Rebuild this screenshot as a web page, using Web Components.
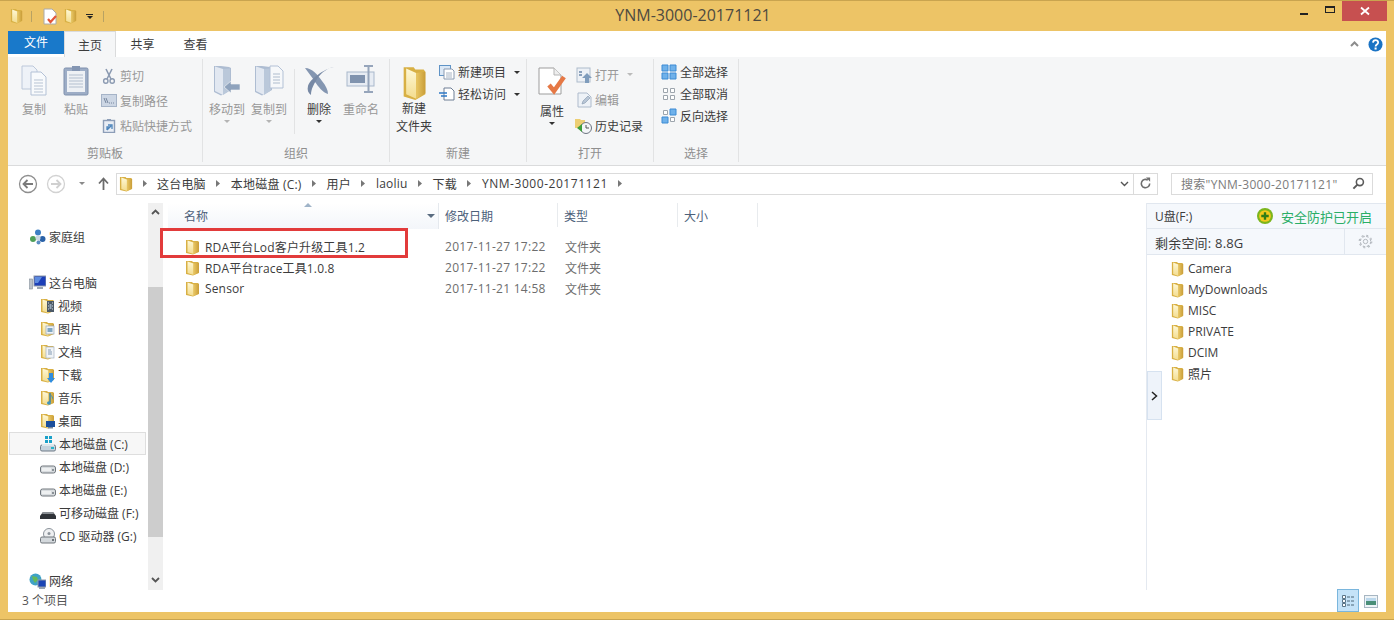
<!DOCTYPE html>
<html lang="zh">
<head>
<meta charset="utf-8">
<title>YNM-3000-20171121</title>
<style>
  html, body { margin: 0; height: 100%; overflow: hidden; }
  body { font: 12px 'Open Sans', 'Noto Sans CJK SC', sans-serif; color: #3c3c3c; }
</style>
</head>
<body>
<win-window>
  <win-titlebar slot="title" caption="YNM-3000-20171121"></win-titlebar>
  <win-tabs slot="tabs"></win-tabs>

  <win-ribbon slot="ribbon">
    <rb-group label="剪贴板" style="--w:195px;--pad:7px 0 0 5px">
      <rb-big style="--bw:42px" dim><x-icon name="copy" w="28" h="31"></x-icon>复制</rb-big>
      <rb-big style="--bw:42px" dim><x-icon name="paste" w="26" h="31"></x-icon>粘贴</rb-big>
      <rb-col style="--rh:25px;--top:-3px">
        <rb-small dim><x-icon name="cut" w="14" h="16"></x-icon>剪切</rb-small>
        <rb-small dim><x-icon name="path" w="16" h="13"></x-icon>复制路径</rb-small>
        <rb-small dim><x-icon name="shortcut" w="14" h="15"></x-icon>粘贴快捷方式</rb-small>
      </rb-col>
    </rb-group>
    <rb-group label="组织" style="--w:187px;--pad:7px 0 0 3px">
      <rb-big style="--bw:42px" dim arrow><x-icon name="moveto" w="28" h="32"></x-icon>移动到</rb-big>
      <rb-big style="--bw:42px" dim arrow><x-icon name="copyto" w="30" h="32"></x-icon>复制到</rb-big>
      <rb-sep></rb-sep>
      <rb-big style="--bw:46px" arrow dark><x-icon name="del" w="30" h="31"></x-icon>删除</rb-big>
      <rb-big style="--bw:38px" dim><x-icon name="rename" w="30" h="28"></x-icon>重命名</rb-big>
    </rb-group>
    <rb-group label="新建" style="--w:137px;--pad:7px 0 0 3px">
      <rb-big style="--bw:42px;--ich:35px" dark><x-icon name="folder" w="25" h="36"></x-icon>新建<br>文件夹</rb-big>
      <rb-col style="--rh:22px;--top:-5px">
        <rb-small menu><x-icon name="newitem" w="16" h="15"></x-icon>新建项目</rb-small>
        <rb-small menu><x-icon name="easy" w="16" h="14"></x-icon>轻松访问</rb-small>
      </rb-col>
    </rb-group>
    <rb-group label="打开" style="--w:127px;--pad:7px 0 0 5px">
      <rb-big style="--bw:40px;--ich:38px;--icm:2px" arrow dark><x-icon name="props" w="28" h="29"></x-icon>属性</rb-big>
      <rb-col style="--rh:25.5px;--top:-4px">
        <rb-small dim caret><x-icon name="open" w="16" h="16"></x-icon>打开</rb-small>
        <rb-small dim><x-icon name="edit" w="15" h="16"></x-icon>编辑</rb-small>
        <rb-small><x-icon name="history" w="18" h="16"></x-icon>历史记录</rb-small>
      </rb-col>
    </rb-group>
    <rb-group label="选择" style="--w:85px;--pad:4px 0 0 3px">
      <rb-col style="--rh:22px;--top:-2px">
        <rb-small><x-icon name="selall" w="16" h="16"></x-icon>全部选择</rb-small>
        <rb-small><x-icon name="selnone" w="16" h="16"></x-icon>全部取消</rb-small>
        <rb-small><x-icon name="selinv" w="16" h="16"></x-icon>反向选择</rb-small>
      </rb-col>
    </rb-group>
  </win-ribbon>

  <win-address slot="address"></win-address>

  <nav-pane slot="nav">
    <nav-item top style="margin-top:25px"><x-icon name="home" w="17" h="16"></x-icon>家庭组</nav-item>
    <nav-item top style="margin-top:23px"><x-icon name="pc" w="17" h="16"></x-icon>这台电脑</nav-item>
    <nav-item><x-icon name="fvideo" w="15" h="16"></x-icon>视频</nav-item>
    <nav-item><x-icon name="fpic" w="15" h="16"></x-icon>图片</nav-item>
    <nav-item><x-icon name="fdoc" w="15" h="16"></x-icon>文档</nav-item>
    <nav-item><x-icon name="fdown" w="15" h="16"></x-icon>下载</nav-item>
    <nav-item><x-icon name="fmusic" w="15" h="16"></x-icon>音乐</nav-item>
    <nav-item><x-icon name="fdesk" w="15" h="16"></x-icon>桌面</nav-item>
    <nav-item selected><x-icon name="sysdisk" w="16" h="16"></x-icon>本地磁盘 (C:)</nav-item>
    <nav-item><x-icon name="disk" w="16" h="16"></x-icon>本地磁盘 (D:)</nav-item>
    <nav-item><x-icon name="disk" w="16" h="16"></x-icon>本地磁盘 (E:)</nav-item>
    <nav-item><x-icon name="usb" w="16" h="16"></x-icon>可移动磁盘 (F:)</nav-item>
    <nav-item><x-icon name="cd" w="16" h="16"></x-icon>CD 驱动器 (G:)</nav-item>
    <nav-item top style="margin-top:22px"><x-icon name="net" w="17" h="16"></x-icon>网络</nav-item>
  </nav-pane>

  <file-list slot="files">
    <file-row name="RDA平台Lod客户升级工具1.2" date="2017-11-27 17:22" type="文件夹"></file-row>
    <file-row name="RDA平台trace工具1.0.8" date="2017-11-27 17:22" type="文件夹"></file-row>
    <file-row name="Sensor" date="2017-11-21 14:58" type="文件夹"></file-row>
  </file-list>

  <side-panel slot="side">
    <side-folder>Camera</side-folder>
    <side-folder>MyDownloads</side-folder>
    <side-folder>MISC</side-folder>
    <side-folder>PRIVATE</side-folder>
    <side-folder>DCIM</side-folder>
    <side-folder>照片</side-folder>
  </side-panel>

  <win-status slot="status">3 个项目</win-status>
</win-window>

<script>
const FOLDER = `
  <defs>
    <linearGradient id="p" x1="0" x2="0" y1="0" y2="1">
      <stop offset="0" stop-color="#fef8d6"/><stop offset="1" stop-color="#f3dc8e"/></linearGradient>
    <linearGradient id="g" x1="0" x2="1" y1="0" y2="0">
      <stop offset="0" stop-color="#e9c764"/><stop offset="1" stop-color="#c99d38"/></linearGradient>
  </defs>
  <path d="M1 1l6 0 1 1h5l1 1v10l-6 2.500L1 14z" fill="#d8b044"/>
  <path d="M2.500 1.500L8.500 3.500V15L2.500 13z" fill="url(#p)"/>
  <path d="M8.500 3.500L14 3v9.500L8.500 15z" fill="url(#g)"/>`

// same folder shape, in the washed blue of a disabled ribbon button
const GREY_FOLDER = `
  <path d="M1 1l7 0 8 1 2 1v22l-10 5.500L1 27z" fill="#aebdd2"/>
  <path d="M2 1.500L10 4v26L2 26z" fill="#e2e8f1"/>
  <path d="M10 4l7-.500v22L10 30z" fill="#bac8da"/>`

// each icon: [viewBox width, viewBox height, markup]
const ICONS = {
  folder: [15, 16, FOLDER],
  copy: [28, 31, `
    <path d="M2 1h11l4 4v19H2z" fill="#eef2f8" stroke="#bcc8da"/>
    <path d="M11 7h10l5 5v18H11z" fill="#f8fafc" stroke="#b3c1d6"/>
    <path d="M14 15h9M14 18h9M14 21h9M14 24h9M14 27h9" stroke="#b7c3d3"/>`],
  paste: [26, 31, `
    <rect x="1" y="3" width="24" height="27" rx="1.5" fill="#9dadc6" stroke="#7e90ad"/>
    <rect x="4" y="6" width="18" height="21" fill="#eef1f5"/>
    <path d="M6 10h14M6 13h14M6 16h14M6 19h14M6 22h14" stroke="#b3bfcf"/>
    <rect x="9" y="1" width="8" height="5" fill="#8496b3"/>`],
  cut: [14, 16, `
    <path d="M4 1l5 10M10 1L5 11" stroke="#8b9ab1" stroke-width="1.6" fill="none"/>
    <circle cx="3.8" cy="13" r="2.2" fill="none" stroke="#8b9ab1" stroke-width="1.4"/>
    <circle cx="10.2" cy="13" r="2.2" fill="none" stroke="#8b9ab1" stroke-width="1.4"/>`],
  path: [16, 13, `
    <rect x=".5" y=".5" width="15" height="12" fill="#ccd6e4" stroke="#a5b3c7"/>
    <path d="M3 4l2 5M5 4l2 5" stroke="#76869e"/><path d="M8 9h1M10 9h1M12 9h1" stroke="#76869e"/>`],
  shortcut: [14, 15, `
    <rect x="1.5" y="2.5" width="11" height="12" fill="#e8edf4" stroke="#8c9db7" stroke-width="1.4"/>
    <rect x="5" y="1" width="4" height="2" fill="#8c9db7"/>
    <path d="M5 12V9h3M6 7h4v4M5 12l4-4" stroke="#4d85bc" stroke-width="1.3" fill="none"/>`],
  moveto: [28, 32, GREY_FOLDER + `<path d="M11 22l7-6v3h9v6h-9v3z" fill="#8fa3bd" stroke="#f5f6f7" stroke-width=".6"/>`],
  copyto: [30, 32, GREY_FOLDER + `
    <path d="M16 1h8l5 5v17H16z" fill="#f6f8fa" stroke="#b3c1d6"/>
    <path d="M19 9h7M19 12h7M19 15h7M19 18h7" stroke="#aebccd"/>`],
  del: [30, 31, `
    <path d="M1 3c7 0 13 7 17 13 4 5 6 9 6 13-5-1-10-8-13-12C8 12 4 7 1 3z" fill="#8496b1"/>
    <path d="M30 2c-7 1-13 6-17 12-3 5-6 10-6 16-3-2-4-5-3-9C6 14 20 4 30 2z" fill="#7789a5"/>`],
  rename: [30, 28, `
    <rect x="1" y="7" width="27" height="14" fill="#e7ecf3" stroke="#a9b8cc"/>
    <rect x="4" y="10" width="15" height="8" fill="#8093ae"/>
    <path d="M18 1h9M18 27h9M22.500 1v26" stroke="#96a5bb" stroke-width="2"/>`],
  newitem: [16, 15, `
    <rect x=".5" y=".5" width="11" height="10" fill="#dbe8f6" stroke="#5f93c6"/>
    <path d="M5 4h8l2 2v8H5z" fill="#fff" stroke="#8a9ab1"/>
    <path d="M7 8h6M7 10h6M7 12h6" stroke="#a8b4c4"/>`],
  easy: [16, 14, `
    <path d="M5 1h7l3 3v9H5z" fill="#fff" stroke="#6f7f95"/>
    <path d="M0 6h8M2 9h6" stroke="#2f79c6" stroke-width="1.5"/>`],
  props: [28, 29, `
    <path d="M1 1h15l7 7v19H1z" fill="#fff" stroke="#9d9d9d"/>
    <path d="M16 1v7h7" fill="#eee" stroke="#b5b5b5"/>
    <path d="M11 18l5 6 10-14" fill="none" stroke="#e57845" stroke-width="4.500"/>`],
  open: [16, 16, `
    <rect x="1" y="1" width="13" height="14" fill="#edf1f6" stroke="#aebbcc"/>
    <path d="M3 5h3M3 8h3" stroke="#8ba1bc" stroke-width="2"/>
    <path d="M11 6l5 5h-3v5H9v-5H6z" fill="#7f9cbc"/>`],
  edit: [15, 16, `
    <path d="M1 1h9l4 4v10H1z" fill="#eef2f7" stroke="#aebbcc"/>
    <path d="M5 12l1-3 5-5 2 2-5 5z" fill="#b9c6d6" stroke="#8fa0b5" stroke-width=".7"/>`],
  history: [18, 16, `
    <path d="M0 1h5l1 1h4v8H0z" fill="#edcf74"/>
    <circle cx="11" cy="10" r="5.500" fill="#f4f6f8" stroke="#6d7480"/>
    <path d="M11 7v3h3" stroke="#555" fill="none"/>
    <path d="M7 6L2 10l5 4z" fill="#3f9e3a"/>`],
  selall: [16, 16, `<path d="M1 1h6v6H1zM9 1h6v6H9zM1 9h6v6H1zM9 9h6v6H9z" fill="#6fb1ea" stroke="#3d8bd4"/>`],
  selnone: [16, 16, `<path d="M2.500 2.500h4v4h-4zM9.500 2.500h4v4h-4zM2.500 9.500h4v4h-4zM9.500 9.500h4v4h-4z" fill="#fff" stroke="#9da5ad"/>`],
  selinv: [16, 16, `
    <path d="M9 1h6v6H9zM1 9h6v6H1z" fill="#6fb1ea" stroke="#3d8bd4"/>
    <path d="M2.500 2.500h4v4h-4zM9.500 9.500h4v4h-4z" fill="#fff" stroke="#9da5ad"/>`],
  doccheck: [16, 17, `
    <path d="M2 1h8l4 4v11H2z" fill="#fff" stroke="#aaa"/>
    <path d="M6 11l2.500 3L14 8" fill="none" stroke="#e2563a" stroke-width="2.200"/>`],
  home: [17, 16, `
    <circle cx="9" cy="3.500" r="3" fill="#3d7fc4"/><circle cx="13.500" cy="10" r="3" fill="#2a62a8"/>
    <circle cx="4" cy="10" r="3" fill="#4f9f58"/><circle cx="9" cy="9" r="2.500" fill="#c9d6e2"/>
    <circle cx="9.500" cy="13.500" r="2" fill="#5d8fc4"/>`],
  pc: [17, 16, `
    <rect x="5" y="1" width="12" height="10" fill="#1c3fb8" stroke="#8d99aa"/>
    <path d="M6 2h7l-4 6H6z" fill="#5d8be0"/>
    <path d="M8 12h6v2H8z" fill="#9aa5b1"/><rect x="0" y="4" width="3.500" height="10" fill="#b9c0c8" stroke="#7f8994" stroke-width=".6"/>`],
  net: [17, 16, `
    <circle cx="6.500" cy="6.500" r="6" fill="#3fa2c6"/><path d="M3 3l5 1 1 3-3 3-2-3z" fill="#66b85a"/>
    <rect x="9" y="7" width="8" height="7" fill="#1b45b5" stroke="#8d99aa"/><path d="M10 14h6v2h-6z" fill="#9aa5b1"/>`],
  fvideo: [15, 16, FOLDER + `<rect x="7" y="3" width="7" height="11" fill="#4c5a68"/><path d="M8 5h1M8 8h1M8 11h1M12 5h1M12 8h1M12 11h1" stroke="#d5dbe2"/><rect x="9.500" y="6" width="2" height="5" fill="#93a6b8"/>`],
  fpic: [15, 16, FOLDER + `<rect x="6" y="5" width="8" height="8" fill="#eef2f6" stroke="#9aa8b8" stroke-width=".7"/><rect x="7.500" y="7" width="5" height="4" fill="#7fa6c2"/>`],
  fdoc: [15, 16, FOLDER + `<rect x="6" y="3" width="8" height="11" fill="#f1f4f7" stroke="#a5b1bf" stroke-width=".7"/><path d="M8 6h3M8 8h4M8 10h4" stroke="#8299b2"/>`],
  fdown: [15, 16, FOLDER + `<path d="M9 6h4v5h2l-4 5-4-5h2z" fill="#2f8de0"/>`],
  fmusic: [15, 16, FOLDER + `<path d="M10 3v9" stroke="#2e7ea8" stroke-width="1.400"/><path d="M10 3c1 3 4 3 3 7M7 13a2 1.700 0 1 0 4 0 2 1.700 0 1 0-4 0" fill="#3d93bf"/>`],
  fdesk: [15, 16, FOLDER + `<rect x="6" y="8" width="9" height="6" fill="#1c4f9c"/><rect x="8" y="14" width="5" height="1.500" fill="#76869a"/>`],
  sysdisk: [16, 16, `
    <path d="M5 0h3v3H5zM9 0h3v3H9zM5 4h3v3H5zM9 4h3v3H9z" fill="#1ba1c9"/>
    <rect x=".5" y="9" width="15" height="6" rx="1.500" fill="#c5d2dc" stroke="#6f7b87"/><rect x="2" y="8" width="12" height="2" fill="#dfe7ec"/><rect x="11" y="11" width="3" height="2" fill="#27b2c9"/>`],
  disk: [16, 16, `
    <rect x=".5" y="7" width="15" height="7" rx="2" fill="#d8dcdf" stroke="#70777d"/><rect x="2" y="9" width="9" height="3" fill="#eef0f1"/><rect x="12" y="10" width="2" height="2" fill="#8a9197"/>`],
  usb: [16, 16, `
    <path d="M3 7h10l3 4v3H0v-3z" fill="#2f3338"/><path d="M3 7h10l1 2H2z" fill="#8a8f94"/>`],
  cd: [16, 16, `
    <circle cx="9" cy="6" r="5.500" fill="#eef0f2" stroke="#8b929a"/><circle cx="9" cy="5.500" r="1.500" fill="#8b929a"/>
    <rect x=".5" y="9" width="15" height="6" rx="1.500" fill="#d3d8dc" stroke="#70777d"/><rect x="12" y="11" width="2" height="2" fill="#6b7278"/>`],
  shield: [15, 15, `
    <circle cx="7.500" cy="7.500" r="7.500" fill="#7cb51c"/><circle cx="7.500" cy="7.500" r="5.500" fill="#f3c91c"/>
    <path d="M7.500 4v7M4 7.500h7" stroke="#2f7d16" stroke-width="2.200"/>`],
  gear: [15, 15, `
    <circle cx="7.500" cy="7.500" r="2.200" fill="none" stroke="#b4b9bf"/>
    <circle cx="7.500" cy="7.500" r="5.200" fill="none" stroke="#b4b9bf" stroke-width="1.100" stroke-dasharray="2.600 1.500"/>
    <circle cx="7.500" cy="7.500" r="6.300" fill="none" stroke="#b4b9bf" stroke-width="1.100" stroke-dasharray="2 2.950"/>`],
  back: [20, 20, `
    <circle cx="10" cy="10" r="8.500" fill="#fff" stroke="#8e8e8e" stroke-width="1.300"/>
    <path d="M15 10H6M9.500 6L5.500 10l4 4" fill="none" stroke="#7a7a7a" stroke-width="1.800"/>`],
  forward: [20, 20, `
    <circle cx="10" cy="10" r="8.500" fill="#fff" stroke="#d2d2d2" stroke-width="1.300"/>
    <path d="M5 10h9M10.500 6l4 4-4 4" fill="none" stroke="#d0d0d0" stroke-width="1.800"/>`],
  up: [11, 13, `<path d="M5.500 13V2M1 6.500L5.500 1.500 10 6.500" fill="none" stroke="#6b6b6b" stroke-width="1.800"/>`],
  refresh: [14, 14, `<path d="M11.500 7a4.500 4.500 0 1 1-2-3.700" fill="none" stroke="#6e6e6e" stroke-width="1.700"/><path d="M7.500 .5h4.500v4.500z" fill="#6e6e6e"/>`],
  search: [14, 14, `<circle cx="8.500" cy="5.500" r="3.800" fill="none" stroke="#5a5a5a" stroke-width="1.700"/><path d="M5.800 8.200L1.500 12.500" stroke="#5a5a5a" stroke-width="2.200"/>`],
  help: [16, 16, `<circle cx="8" cy="8" r="7.500" fill="#1a73c4"/><path d="M5.300 6c.2-3.500 5.600-3.500 5.500-.2 0 2.200-2.700 2.200-2.700 4.300" fill="none" stroke="#fff" stroke-width="1.900"/><rect x="7" y="11.200" width="2.200" height="2.200" fill="#fff"/>`],
  details: [14, 14, `<path d="M1.500 1.500h3v3h-3zM1.500 5.500h3v3h-3zM1.500 9.500h3v3h-3z" fill="#fff" stroke="#5a7487"/><path d="M6 3h8M6 7h8M6 11h8" stroke="#4d6679" stroke-dasharray="3 1"/>`],
  thumbs: [14, 13, `<rect x=".5" y=".5" width="13" height="12" fill="#eef4f8" stroke="#a7b6c2"/><rect x="2" y="3" width="10" height="7" fill="#4a8f78"/><rect x="2" y="3" width="10" height="3" fill="#bcd8ec"/>`]
}

/**
 * One small picture, drawn from the ICONS table.
 */
customElements.define('x-icon', class extends HTMLElement {
  connectedCallback () {
    const [vw, vh, body] = ICONS[this.getAttribute('name')]
    const w = this.getAttribute('w') || vw
    const h = this.getAttribute('h') || vh
    this.attachShadow({ mode: 'open' }).innerHTML = `
      <style>:host { display: inline-flex; flex: none; } svg { display: block; }</style>
      <svg width="${w}" height="${h}" viewBox="0 0 ${vw} ${vh}" preserveAspectRatio="none">${body}</svg>`
  }
})

const windowTemplate = document.createElement('template')
windowTemplate.innerHTML = `
  <style>
    :host {
      display: flex;
      flex-direction: column;
      box-sizing: border-box;
      width: 1394px;
      height: 620px;
      background: #edc466;
      border-top: 1px solid #c9a44f;
      border-bottom: 1px solid #c9a44f;
      overflow: hidden;
    }
    #inner {
      flex: 1;
      min-height: 0;
      margin: 0 8px 7px;
      display: flex;
      flex-direction: column;
      background: #fff;
    }
    #main {
      flex: 1;
      min-height: 0;
      display: flex;
    }
  </style>
  <slot name="title"></slot>
  <div id="inner">
    <slot name="tabs"></slot>
    <slot name="ribbon"></slot>
    <slot name="address"></slot>
    <div id="main">
      <slot name="nav"></slot>
      <slot name="files"></slot>
      <slot name="side"></slot>
    </div>
    <slot name="status"></slot>
  </div>
`
customElements.define('win-window', class extends HTMLElement {
  constructor () {
    super()
    this.attachShadow({ mode: 'open' }).appendChild(windowTemplate.content.cloneNode(true))
  }
})

customElements.define('win-titlebar', class extends HTMLElement {
  connectedCallback () {
    this.attachShadow({ mode: 'open' }).innerHTML = `
      <style>
        :host { display: flex; align-items: flex-start; height: 30px; position: relative; }
        #quick { display: flex; align-items: center; gap: 0; height: 30px; padding-left: 10px; }
        .sep { width: 1px; height: 11px; background: #b8a263; }
        #caption {
          position: absolute; left: 0; right: 8px; top: 4px; text-align: center;
          font-size: 16px; line-height: 20px; color: #4d4a40; pointer-events: none;
        }
        #btns { margin-left: auto; margin-right: 7px; display: flex; height: 20px; }
        .b { display: flex; align-items: center; justify-content: center; height: 20px; }
        #min { width: 26px; } #min i { display: block; width: 8px; height: 2px; margin-top: 5px; background: #222; }
        #max { width: 25px; } #max i { display: block; box-sizing: border-box; width: 10px; height: 7px; margin-top: -3px; border: 1px solid #222; border-top-width: 2px; }
        #close { width: 45px; background: #c75050; color: #fff; }
        .caret { width: 0; height: 0; border: 3px solid transparent; border-top-color: #222; border-bottom: 0; margin-top: 2px; }
      </style>
      <div id="quick">
        <x-icon name="folder" w="13" h="16"></x-icon>
        <span class="sep" style="margin-left:8px"></span>
        <x-icon name="doccheck" w="16" h="17" style="margin-left:10px"></x-icon>
        <x-icon name="folder" w="13" h="16" style="margin-left:6px"></x-icon>
        <span style="margin-left:9px;display:flex;flex-direction:column;align-items:center;gap:1px">
          <i style="width:7px;height:1px;background:#222"></i><i class="caret" style="margin:0"></i>
        </span>
        <span class="sep" style="margin-left:10px"></span>
      </div>
      <div id="caption">${this.getAttribute('caption')}</div>
      <div id="btns">
        <div class="b" id="min"><i></i></div>
        <div class="b" id="max"><i></i></div>
        <div class="b" id="close">
          <svg width="10" height="10" viewBox="0 0 10 10"><path d="M1 1.500l8 7M9 1.500l-8 7" stroke="#fff" stroke-width="1.800"/></svg>
        </div>
      </div>`
  }
})

customElements.define('win-tabs', class extends HTMLElement {
  connectedCallback () {
    this.attachShadow({ mode: 'open' }).innerHTML = `
      <style>
        :host { display: flex; height: 26px; flex: none; background: #fff; color: #3c3c3c; }
        .t { width: 53px; text-align: center; line-height: 27px; }
        #file { width: 56px; height: 23px; line-height: 23px; background: #1979ca; color: #fff; }
        #home { width: 52px; box-sizing: border-box; background: #f5f6f7; border: 1px solid #dadbdc; border-bottom: 0; }
        #right { margin-left: auto; display: flex; align-items: center; gap: 9px; padding-right: 3px; }
      </style>
      <div class="t" id="file">文件</div>
      <div class="t" id="home">主页</div>
      <div class="t">共享</div>
      <div class="t">查看</div>
      <div id="right">
        <svg width="9" height="6" viewBox="0 0 9 6"><path d="M1 5l3.500-3.500L8 5" fill="none" stroke="#8c8c8c" stroke-width="2"/></svg>
        <x-icon name="help" w="15" h="15"></x-icon>
      </div>`
  }
})

customElements.define('win-ribbon', class extends HTMLElement {
  connectedCallback () {
    this.attachShadow({ mode: 'open' }).innerHTML = `
      <style>
        :host {
          display: flex; flex: none; height: 109px; box-sizing: border-box;
          background: #f5f6f7; border-bottom: 1px solid #dadbdc;
        }
      </style>
      <slot></slot>`
  }
})

customElements.define('rb-group', class extends HTMLElement {
  connectedCallback () {
    this.attachShadow({ mode: 'open' }).innerHTML = `
      <style>
        :host {
          display: flex; flex-direction: column; flex: none; box-sizing: border-box;
          width: var(--w); border-right: 1px solid #e2e3e4; margin: 2px 0 3px;
        }
        #body { flex: 1; display: flex; align-items: flex-start; padding: var(--pad); min-height: 0; }
        #label { height: 17px; line-height: 18px; text-align: center; color: #8f8f8f; }
      </style>
      <div id="body"><slot></slot></div>
      <div id="label">${this.getAttribute('label')}</div>`
  }
})

customElements.define('rb-big', class extends HTMLElement {
  connectedCallback () {
    const arrow = this.hasAttribute('arrow')
    const tone = this.hasAttribute('dark') ? '#3c3c3c' : '#989898'
    const caret = this.hasAttribute('dark') ? '#333' : '#b4b4b4'
    this.attachShadow({ mode: 'open' }).innerHTML = `
      <style>
        :host {
          display: flex; flex-direction: column; align-items: center; flex: none;
          width: var(--bw); color: ${tone}; text-align: center; line-height: 18px;
        }
        #ic {
          height: var(--ich, 36px); display: flex; align-items: flex-start; justify-content: center;
          margin-top: -1px; padding-top: var(--icm, 0);
          box-sizing: border-box;
        }
        #tx { white-space: nowrap; }
        #ar { width: 0; height: 0; margin-top: 1px; border: 3px solid transparent; border-top-color: ${caret}; border-bottom: 0; display: ${arrow ? 'block' : 'none'}; }
      </style>
      <div id="ic"><slot name="icon"></slot></div>
      <div id="tx"><slot></slot></div>
      <div id="ar"></div>`
    const icon = this.querySelector('x-icon')
    if (icon) icon.slot = 'icon'
  }
})

customElements.define('rb-sep', class extends HTMLElement {
  connectedCallback () {
    this.attachShadow({ mode: 'open' }).innerHTML = `
      <style>:host { display: block; flex: none; width: 1px; height: 65px; margin: 3px 1px 0 4px; background: #e2e3e4; }</style>`
  }
})

customElements.define('rb-col', class extends HTMLElement {
  connectedCallback () {
    this.attachShadow({ mode: 'open' }).innerHTML = `
      <style>
        :host { display: grid; grid-auto-rows: var(--rh); flex: none; margin-top: var(--top); margin-left: 3px; }
      </style>
      <slot></slot>`
  }
})

customElements.define('rb-small', class extends HTMLElement {
  connectedCallback () {
    const tone = this.hasAttribute('dim') ? '#989898' : '#3c3c3c'
    const menu = this.hasAttribute('menu')
    const caret = this.hasAttribute('caret')
    const mark = menu || caret
      ? `<i style="width:0;height:0;margin-left:6px;border:3px solid transparent;border-bottom:0;border-top-color:${menu ? '#333' : '#bbb'}"></i>`
      : ''
    this.attachShadow({ mode: 'open' }).innerHTML = `
      <style>
        :host { display: flex; align-items: center; gap: 2px; color: ${tone}; white-space: nowrap; }
        #ic { width: 18px; display: flex; justify-content: center; flex: none; }
      </style>
      <div id="ic"><slot name="icon"></slot></div>
      <slot></slot>${mark}`
    const icon = this.querySelector('x-icon')
    if (icon) icon.slot = 'icon'
  }
})

customElements.define('win-address', class extends HTMLElement {
  connectedCallback () {
    const crumbs = ['这台电脑', '本地磁盘 (C:)', '用户', 'laoliu', '下载']
    const sep = '<svg width="4" height="7" viewBox="0 0 4 7"><path d="M0 0l4 3.500-4 3.500z" fill="#777"/></svg>'
    this.attachShadow({ mode: 'open' }).innerHTML = `
      <style>
        :host { display: flex; align-items: center; flex: none; box-sizing: border-box; height: 34px; padding: 1px 0 0 10px; }
        #dd { width: 0; height: 0; margin: 0 0 0 13px; border: 3.500px solid transparent; border-bottom: 0; border-top-color: #8a8a8a; }
        #box {
          box-sizing: border-box; width: 1018px; height: 22px; margin-left: 7px; flex: none;
          display: flex; align-items: center; border: 1px solid #dbdbdb; padding-left: 2px; position: relative;
        }
        #crumbs { display: flex; align-items: center; gap: 10.5px; margin-left: 9.500px; color: #3c3c3c; white-space: nowrap; letter-spacing: .2px; }
        #last { letter-spacing: .55px; }
        #chev { margin-left: auto; margin-right: 4px; }
        #ref {
          box-sizing: border-box; width: 24px; height: 22px; flex: none; display: flex;
          align-items: center; justify-content: center; border: 1px solid #dbdbdb; border-left: 0;
        }
        #search {
          box-sizing: border-box; width: 202px; height: 22px; margin-left: 13px; flex: none;
          display: flex; align-items: center; padding: 0 7px 0 9px; border: 1px solid #dbdbdb;
          color: #7c7c7c; white-space: nowrap; justify-content: space-between; letter-spacing: .3px;
        }
      </style>
      <x-icon name="back" w="20" h="20"></x-icon>
      <x-icon name="forward" w="20" h="20" style="margin-left:8px"></x-icon>
      <i id="dd"></i>
      <x-icon name="up" w="11" h="13" style="margin-left:13px"></x-icon>
      <div id="box">
        <x-icon name="folder" w="14" h="16"></x-icon>
        <div id="crumbs">${crumbs.map(c => sep + '<span>' + c + '</span>').join('')}${sep}<span id="last">YNM-3000-20171121</span>${sep}</div>
        <svg id="chev" width="9" height="6" viewBox="0 0 9 6"><path d="M1 1l3.500 3.500L8 1" fill="none" stroke="#555" stroke-width="1.400"/></svg>
      </div>
      <div id="ref"><x-icon name="refresh" w="13" h="13"></x-icon></div>
      <div id="search"><span>搜索"YNM-3000-20171121"</span><x-icon name="search" w="13" h="13"></x-icon></div>`
  }
})

customElements.define('nav-pane', class extends HTMLElement {
  connectedCallback () {
    this.attachShadow({ mode: 'open' }).innerHTML = `
      <style>
        :host { display: flex; flex: none; width: 155px; height: 100%; overflow: hidden; }
        #list { width: 140px; flex: none; min-height: 0; }
        #bar {
          width: 15px; flex: none; margin-top: 3px; background: #f0f0f0;
          display: flex; flex-direction: column; align-items: center;
        }
        #thumb { width: 15px; height: 250px; margin-top: 67px; background: #cdcdcd; }
        .arrow { height: 17px; display: flex; align-items: center; justify-content: center; }
      </style>
      <div id="list"><slot></slot></div>
      <div id="bar">
        <div class="arrow"><svg width="9" height="6" viewBox="0 0 9 6"><path d="M1 5l3.500-3.500L8 5" fill="none" stroke="#555" stroke-width="1.800"/></svg></div>
        <div id="thumb"></div>
        <div class="arrow" style="margin-top:auto;height:20px"><svg width="9" height="6" viewBox="0 0 9 6"><path d="M1 1l3.500 3.500L8 1" fill="none" stroke="#555" stroke-width="1.800"/></svg></div>
      </div>`
  }
})

customElements.define('nav-item', class extends HTMLElement {
  connectedCallback () {
    const top = this.hasAttribute('top')
    const sel = this.hasAttribute('selected')
    this.attachShadow({ mode: 'open' }).innerHTML = `
      <style>
        :host {
          display: flex; align-items: center; gap: 3px; box-sizing: border-box; height: 23px; white-space: nowrap;
          padding-left: ${top ? 20 : 31}px; margin-left: 1px; margin-right: 2px; color: #3c3c3c;
          ${sel ? 'background:#f7f7f7;outline:1px solid #dedede;outline-offset:-1px;' : ''}
        }
      </style>
      <slot></slot>`
  }
})

customElements.define('file-list', class extends HTMLElement {
  connectedCallback () {
    this.attachShadow({ mode: 'open' }).innerHTML = `
      <style>
        :host { display: block; flex: 1; min-width: 0; position: relative; padding-top: 3px; color: #3c3c3c; }
        #head { display: flex; height: 26px; padding-left: 5px; margin-bottom: 7px; color: #4c607a; }
        .c { box-sizing: border-box; flex: none; padding-left: 6px; line-height: 27px; border-right: 1px solid #e8ebee; height: 24px; }
        #name {
          width: 271px; padding-left: 16px; position: relative; height: 26px;
          background: linear-gradient(#fff, #f3f6fa); border-right: 1px solid #e5e9ee;
        }
        #name::after {
          content: ''; position: absolute; right: 3px; top: 11px;
          border: 4px solid transparent; border-bottom: 0; border-top-color: #5a6c80;
        }
        #sort { position: absolute; left: 136px; top: 0; width: 0; height: 0; border: 4px solid transparent; border-top: 0; border-bottom-color: #9fb3c8; }
        #mark { position: absolute; left: -3px; top: 28px; box-sizing: border-box; width: 248px; height: 30px; border: 3px solid #e23b3b; pointer-events: none; }
      </style>
      <div id="head">
        <div class="c" id="name">名称<i id="sort"></i></div>
        <div class="c" style="width:119px">修改日期</div>
        <div class="c" style="width:120px">类型</div>
        <div class="c" style="width:80px">大小</div>
      </div>
      <slot></slot>
      <div id="mark"></div>`
  }
})

customElements.define('file-row', class extends HTMLElement {
  connectedCallback () {
    this.attachShadow({ mode: 'open' }).innerHTML = `
      <style>
        :host { display: grid; grid-template-columns: 15px 245px 120px auto; column-gap: 0; align-items: center; height: 21px; padding-left: 22px; white-space: nowrap; }
        #name { padding-left: 5px; color: #3c3c3c; letter-spacing: .15px; }
        .m { color: #6d6d6d; }
        #date { letter-spacing: .27px; }
      </style>
      <x-icon name="folder" w="15" h="16"></x-icon>
      <span id="name">${this.getAttribute('name')}</span>
      <span class="m" id="date">${this.getAttribute('date')}</span>
      <span class="m">${this.getAttribute('type')}</span>`
  }
})

customElements.define('side-panel', class extends HTMLElement {
  connectedCallback () {
    this.attachShadow({ mode: 'open' }).innerHTML = `
      <style>
        :host {
          display: block; flex: none; box-sizing: border-box; width: 240px; height: calc(100% - 3px); margin-top: 3px;
          border-left: 1px solid #e4e9f0; position: relative; color: #3c3c3c;
        }
        .r { display: flex; align-items: center; height: 26px; box-sizing: border-box; background: #f5f8fc; border-bottom: 1px solid #e1e7ef; padding-left: 8px; }
        #r1 { border-top: 1px solid #e1e7ef; }
        #safe { margin-left: auto; display: flex; align-items: center; gap: 8px; padding-right: 14px; color: #2aae67; font-size: 13px; }
        #free { font-size: 13px; letter-spacing: .2px; padding-top: 2px; }
        #gear { margin-left: auto; width: 42px; height: 100%; box-sizing: border-box; border-left: 1px solid #e1e7ef; display: flex; align-items: center; justify-content: center; }
        #list { padding-top: 3px; }
        #toggle {
          position: absolute; left: 0; top: 168px; box-sizing: border-box; width: 15px; height: 49px;
          background: #eef3fa; border: 1px solid #d6e2f0; display: flex; align-items: center; justify-content: center;
        }
      </style>
      <div class="r" id="r1">U盘(F:)
        <div id="safe"><x-icon name="shield" w="16" h="16"></x-icon>安全防护已开启</div>
      </div>
      <div class="r"><span id="free">剩余空间: 8.8G</span>
        <div id="gear"><x-icon name="gear" w="15" h="15"></x-icon></div>
      </div>
      <div id="list"><slot></slot></div>
      <div id="toggle"><svg width="7" height="10" viewBox="0 0 7 10"><path d="M1 1l4.500 4L1 9" fill="none" stroke="#222" stroke-width="1.500"/></svg></div>`
  }
})

customElements.define('side-folder', class extends HTMLElement {
  connectedCallback () {
    this.attachShadow({ mode: 'open' }).innerHTML = `
      <style>
        :host { display: flex; align-items: center; gap: 4px; height: 21px; padding-left: 24px; color: #3c3c3c; white-space: nowrap; }
      </style>
      <x-icon name="folder" w="13" h="16"></x-icon><slot></slot>`
  }
})

customElements.define('win-status', class extends HTMLElement {
  connectedCallback () {
    this.attachShadow({ mode: 'open' }).innerHTML = `
      <style>
        :host { display: flex; align-items: center; flex: none; box-sizing: border-box; height: 22px; padding: 0 0 3px 14px; color: #555; }
        #views { margin-left: auto; margin-right: 8px; display: flex; align-items: center; height: 22px; gap: 5px; margin-top: 3px; }
        #d { box-sizing: border-box; width: 22px; height: 23px; margin-top: -1px; background: #c5e3f8; border: 1px solid #7ab6dd; display: flex; align-items: center; justify-content: center; }
      </style>
      <slot></slot>
      <div id="views">
        <div id="d"><x-icon name="details" w="14" h="14"></x-icon></div>
        <x-icon name="thumbs" w="14" h="13"></x-icon>
      </div>`
  }
})
</script>
</body>
</html>
